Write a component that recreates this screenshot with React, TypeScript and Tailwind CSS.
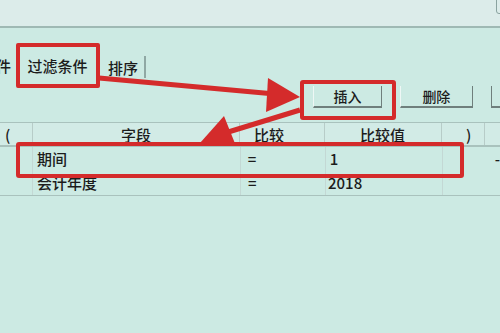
import React from "react";

const font = { fontFamily: '"Noto Sans CJK SC", "Noto Sans", sans-serif' };

export default function App() {
  return (
    <div className="relative w-[500px] h-[333px] overflow-hidden bg-[#cceae3] text-[#1c1c1c] font-medium" style={font}>
      {/* top strip */}
      <div className="relative h-[28px] bg-[#dcecea] border-b-2 border-[#9fb9b4]">
        <div className="absolute right-[-6px] top-[-4px] w-[10px] h-[18px] rounded-[3px] border border-[#8aa3a0]" />
      </div>

      {/* tabs */}
      <div className="flex items-end h-[50px] text-[15px] leading-none">
        <div className="w-[16px] h-[26px] flex items-center">
          <span className="-ml-[4px]">件</span>
        </div>
        <div className="w-[84px] h-[26px] flex items-center justify-center border-r border-[#8fa8a4]">
          过滤条件
        </div>
        <div className="w-[46px] h-[22px] flex items-center pl-[8px] border-r-2 border-[#8fa8a4]">
          排序
        </div>
      </div>

      {/* buttons */}
      <div className="flex h-[36px] items-start pt-[8px] pl-[313px] gap-[18px] text-[14px]">
        <div className="w-[75px] h-[22px] flex items-center justify-center border-b-2 border-r border-[#6f7f7c] border-l border-l-[#eef7f5]">
          插入
        </div>
        <div className="w-[79px] h-[22px] flex items-center justify-center border-b-2 border-r border-[#6f7f7c] border-l border-l-[#eef7f5]">
          删除
        </div>
        <div className="w-[10px] h-[22px] border-b-2 border-l border-[#6f7f7c]" />
      </div>

      {/* table */}
      <div className="mt-[8px] text-[15px]">
        <div className="flex h-[25px] items-end border-t border-b-2 border-[#a9c2bd] bg-[#d2ebe6] leading-none">
          <div className="w-[33px] h-full flex items-end pb-[3px] pl-[5px] border-r border-[#b7ccc8]">(</div>
          <div className="w-[207px] h-full flex items-end pb-[3px] justify-center border-r border-[#b7ccc8]">字段</div>
          <div className="w-[85px] h-full flex items-end pb-[3px] pl-[14px] border-r border-[#b7ccc8]">比较</div>
          <div className="w-[117px] h-full flex items-end pb-[3px] pl-[35px] border-r border-[#b7ccc8]">比较值</div>
          <div className="w-[43px] h-full flex items-end pb-[3px] pl-[24px] border-r border-[#b7ccc8]">)</div>
        </div>
        <div className="flex h-[25px] items-center">
          <div className="w-[33px] h-full border-r border-[#c3d8d4]" />
          <div className="w-[207px] pl-[4px]">期间</div>
          <div className="w-[85px] pl-[7px] h-full flex items-center border-l border-[#c3d8d4]">=</div>
          <div className="w-[117px] pl-[4px] h-full flex items-center border-l border-[#c3d8d4]">1</div>
          <div className="w-[43px] h-full border-l border-[#c3d8d4]" />
          <div className="pl-[10px]">-</div>
        </div>
        <div className="flex h-[24px] items-center border-b border-[#a9c2bd]">
          <div className="w-[33px] h-full border-r border-[#c3d8d4]" />
          <div className="w-[207px] pl-[4px]">会计年度</div>
          <div className="w-[85px] pl-[7px] h-full flex items-center border-l border-[#c3d8d4]">=</div>
          <div className="w-[117px] pl-[2px] h-full flex items-center border-l border-[#c3d8d4]">2018</div>
          <div className="w-[43px] h-full border-l border-[#c3d8d4]" />
        </div>
      </div>

      {/* red highlight boxes */}
      <div className="absolute left-[16px] top-[43px] w-[84px] h-[45px] border-[4px] border-[#d42b2b] rounded-[2px]" />
      <div className="absolute left-[300px] top-[80px] w-[96px] h-[40px] border-[4px] border-[#d42b2b] rounded-[3px]" />
      <div className="absolute left-[16px] top-[142px] w-[448px] h-[36px] border-[4px] border-[#d42b2b] rounded-[3px]" />

      {/* arrows */}
      <svg className="absolute left-0 top-0" width="500" height="333" viewBox="0 0 500 333">
        <line x1="99" y1="78" x2="275" y2="94" stroke="#d42b2b" strokeWidth="5" />
        <polygon points="300,97 268,78 266,112" fill="#d42b2b" />
        <line x1="300" y1="110" x2="225" y2="133" stroke="#d42b2b" strokeWidth="5" />
        <polygon points="200,143 224,116 236,146" fill="#d42b2b" />
      </svg>
    </div>
  );
}
